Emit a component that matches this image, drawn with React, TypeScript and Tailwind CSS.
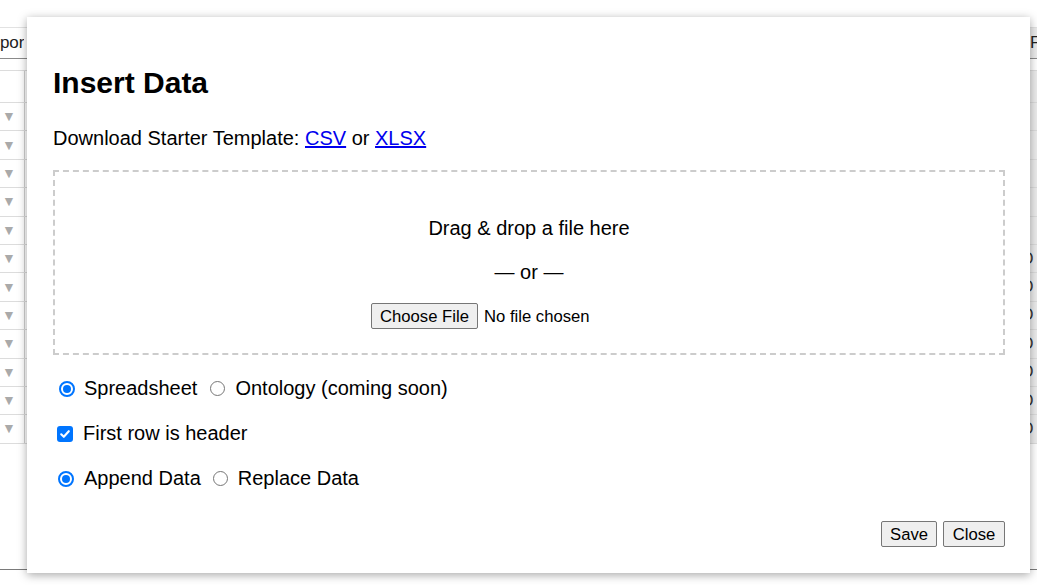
import React from "react";

const font = { fontFamily: '"Liberation Sans", Arial, sans-serif' };

function Radio({ checked }: { checked: boolean }) {
  return checked ? (
    <span className="flex h-[16px] w-[16px] shrink-0 items-center justify-center rounded-full border-[2px] border-[#0075ff] bg-white">
      <span className="h-[8px] w-[8px] rounded-full bg-[#0075ff]" />
    </span>
  ) : (
    <span className="block h-[15px] w-[15px] shrink-0 rounded-full border border-[#767676] bg-white" />
  );
}

function Checkbox() {
  return (
    <span className="flex h-[16px] w-[16px] shrink-0 items-center justify-center rounded-[3px] bg-[#0075ff]">
      <svg width="12" height="12" viewBox="0 0 12 12">
        <path d="M2.2 6.3 L4.8 8.8 L9.8 3.2" fill="none" stroke="white" strokeWidth="2.1" strokeLinecap="round" strokeLinejoin="round" />
      </svg>
    </span>
  );
}

export default function App() {
  const rows = Array.from({ length: 12 }, (_, i) => i);
  return (
    <div className="relative flex h-[585px] w-[1037px] flex-col overflow-hidden bg-white text-black" style={font}>
      {/* Background page */}
      <div className="mt-[27px] flex h-[32px] items-center border-t border-b border-t-[#e2e2e2] border-b-[#8a8a8a]">
        <div className="w-[24px] overflow-hidden whitespace-nowrap text-[17px] text-[#222]">
          <span className="-ml-[19px] inline-block">Import</span>
        </div>
        <div className="flex-1" />
        <div className="flex h-full w-[7px] items-center overflow-hidden whitespace-nowrap bg-[#ececec] text-[17px] text-[#222]">
          <span>Filter</span>
        </div>
      </div>
      <div className="mt-[11px] flex flex-col">
        <div className="flex h-[33px] border-t border-b border-[#dcdcdc]">
          <div className="w-[25px] border-r border-[#cfcfcf]" />
          <div className="flex-1" />
          <div className="w-[7px] bg-[#ececec]" />
        </div>
        {rows.map((i) => (
          <div key={i} className="flex h-[28.4px] border-b border-[#dcdcdc]">
            <div className="flex w-[25px] items-center border-r border-[#cfcfcf] pl-[2px] text-[14px] text-[#aaaaaa]">▼</div>
            <div className="flex-1" />
            <div className="flex w-[15px] items-center overflow-hidden whitespace-nowrap bg-[#ececec] text-[16px] text-[#333]">
              {i >= 5 ? <span className="ml-[-1px]">O</span> : null}
            </div>
          </div>
        ))}
      </div>
      <div className="mt-auto mb-[15px] h-[1px] bg-[#7a7a7a]" />

      {/* Modal */}
      <div className="absolute left-[27px] top-[17px] flex h-[556px] w-[1003px] flex-col bg-white pl-[26px] pr-[25px] pt-[49px] shadow-[0_2px_9px_rgba(0,0,0,0.35)]">
        <h2 className="text-[30px] font-bold leading-[34px]">Insert Data</h2>
        <p className="mt-[27px] text-[20px] leading-[23px]">
          Download Starter Template:{" "}
          <a className="text-[#0000ee] underline">CSV</a> or{" "}
          <a className="text-[#0000ee] underline">XLSX</a>
        </p>
        <div className="mt-[20px] flex h-[185px] flex-col items-center border-2 border-dashed border-[#cccccc] pt-[45px]">
          <div className="text-[20px] leading-[23px]">Drag &amp; drop a file here</div>
          <div className="mt-[21px] text-[20px] leading-[23px]">— or —</div>
          <div className="mt-[19px] flex w-[316px] items-center">
            <span className="flex h-[26px] w-[107px] items-center justify-center rounded-[2px] border border-[#767676] bg-[#efefef] text-[16.67px]">
              Choose File
            </span>
            <span className="ml-[6px] text-[16.67px]">No file chosen</span>
          </div>
        </div>
        <div className="mt-[22px] flex h-[23px] items-center text-[20px] leading-[23px]">
          <span className="ml-[6px] mr-[9px] flex"><Radio checked /></span>
          <span>Spreadsheet</span>
          <span className="ml-[13px] mr-[10px] flex"><Radio checked={false} /></span>
          <span>Ontology (coming soon)</span>
        </div>
        <div className="mt-[22px] flex h-[23px] items-center text-[20px] leading-[23px]">
          <span className="ml-[4px] mr-[10px] flex"><Checkbox /></span>
          <span>First row is header</span>
        </div>
        <div className="mt-[22px] flex h-[23px] items-center text-[20px] leading-[23px]">
          <span className="ml-[5px] mr-[10px] flex"><Radio checked /></span>
          <span>Append Data</span>
          <span className="ml-[12px] mr-[10px] flex"><Radio checked={false} /></span>
          <span>Replace Data</span>
        </div>
        <div className="mt-[31px] flex justify-end gap-[6px]">
          <span className="flex h-[26px] w-[56px] items-center justify-center rounded-[2px] border border-[#767676] bg-[#efefef] text-[16.67px]">Save</span>
          <span className="flex h-[26px] w-[62px] items-center justify-center rounded-[2px] border border-[#767676] bg-[#efefef] text-[16.67px]">Close</span>
        </div>
      </div>
    </div>
  );
}
